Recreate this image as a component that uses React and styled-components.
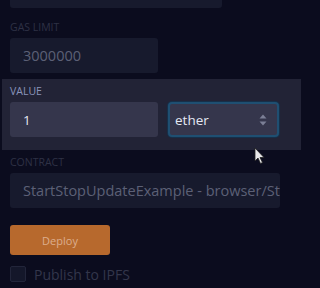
import React from 'react';
import styled, { createGlobalStyle } from 'styled-components';

const GlobalStyle = createGlobalStyle`
  html, body {
    margin: 0;
    padding: 0;
    background: #0b0c1e;
    font-family: "Open Sans", "Liberation Sans", sans-serif;
  }
`;

const Page = styled.div`
  position: relative;
  width: 306px;
  height: 288px;
  overflow: hidden;
  background: #0b0c1e;
`;

const Section = styled.div`
  display: flex;
  flex-direction: column;
  padding: 0 10px;
`;

const Label = styled.div`
  font-size: 10.5px;
  text-transform: uppercase;
  color: ${props => props.active ? '#8a94bb' : '#2e3145'};
  line-height: 10px;
  margin-bottom: 6px;
`;

const Input = styled.div`
  box-sizing: border-box;
  display: flex;
  align-items: center;
  height: 35px;
  width: ${props => props.w}px;
  padding: 0 12px 0 13px;
  border-radius: 3px;
  font-size: ${props => props.active ? '13.5px' : '14.5px'};
  background: ${props => props.active ? '#35364c' : '#171a2d'};
  color: ${props => props.active ? '#e4e8f4' : '#5c6076'};
  white-space: nowrap;
  overflow: hidden;
`;

const TopInput = styled(Input)`
  margin-top: -27px;
  margin-bottom: 14px;
`;

const Panel = styled.div`
  margin: 6px 5px 0 2px;
  padding: 7px 0 13px 8px;
  background: #222336;
  display: flex;
  flex-direction: column;
`;

const Row = styled.div`
  display: flex;
  gap: 10px;
`;

const Select = styled.div`
  box-sizing: border-box;
  display: flex;
  align-items: center;
  justify-content: space-between;
  height: 35px;
  width: 111px;
  padding: 0 10px 0 5px;
  border-radius: 4px;
  border: 2px solid #1f4f72;
  box-shadow: 0 0 0 1px #16304a;
  background: #35364c;
  color: #e4e8f4;
  font-size: 13.5px;
`;

const Contract = styled(Section)`
  margin-top: 7px;
`;

const DeployButton = styled.div`
  display: flex;
  align-items: center;
  justify-content: center;
  width: 100px;
  height: 30px;
  margin: 17px 0 11px 10px;
  border-radius: 3px;
  background: #b7692d;
  color: #dcae8e;
  font-size: 11px;
`;

const CheckRow = styled.div`
  display: flex;
  align-items: center;
  gap: 8px;
  height: 16px;
  padding-left: 10px;
  color: #33364b;
  font-size: 14px;
`;

const Box = styled.div`
  box-sizing: border-box;
  width: 16px;
  height: 16px;
  border: 1px solid #22253a;
  border-radius: 2px;
  background: #14172a;
`;

const Pointer = styled.svg`
  position: absolute;
  left: 254px;
  top: 147px;
`;

function Arrows() {
  return (
    <svg width="8" height="12" viewBox="0 0 8 12">
      <path d="M4 0.5 L7.5 4.5 H0.5 Z" fill="#7b7f96" />
      <path d="M4 11.5 L7.5 7.5 H0.5 Z" fill="#7b7f96" />
    </svg>
  );
}

export default function App() {
  return (
    <Page>
      <GlobalStyle />
      <Section>
        <TopInput w={212} />
        <Label>Gas limit</Label>
        <Input w={148}>3000000</Input>
      </Section>
      <Panel>
        <Label active>Value</Label>
        <Row>
          <Input w={148} active>1</Input>
          <Select>
            <span>ether</span>
            <Arrows />
          </Select>
        </Row>
      </Panel>
      <Contract>
        <Label>Contract</Label>
        <Input w={270}>StartStopUpdateExample - browser/StartStopUpdateExample.sol</Input>
      </Contract>
      <DeployButton>Deploy</DeployButton>
      <CheckRow>
        <Box />
        <span>Publish to IPFS</span>
      </CheckRow>
      <Pointer width="12" height="18" viewBox="0 0 12 18">
        <path d="M1 1 L1 14 L4 11 L6.5 16.5 L8.5 15.5 L6 10.5 L10 10.5 Z" fill="#e8e8ea" stroke="#222" strokeWidth="0.8" />
      </Pointer>
    </Page>
  );
}
